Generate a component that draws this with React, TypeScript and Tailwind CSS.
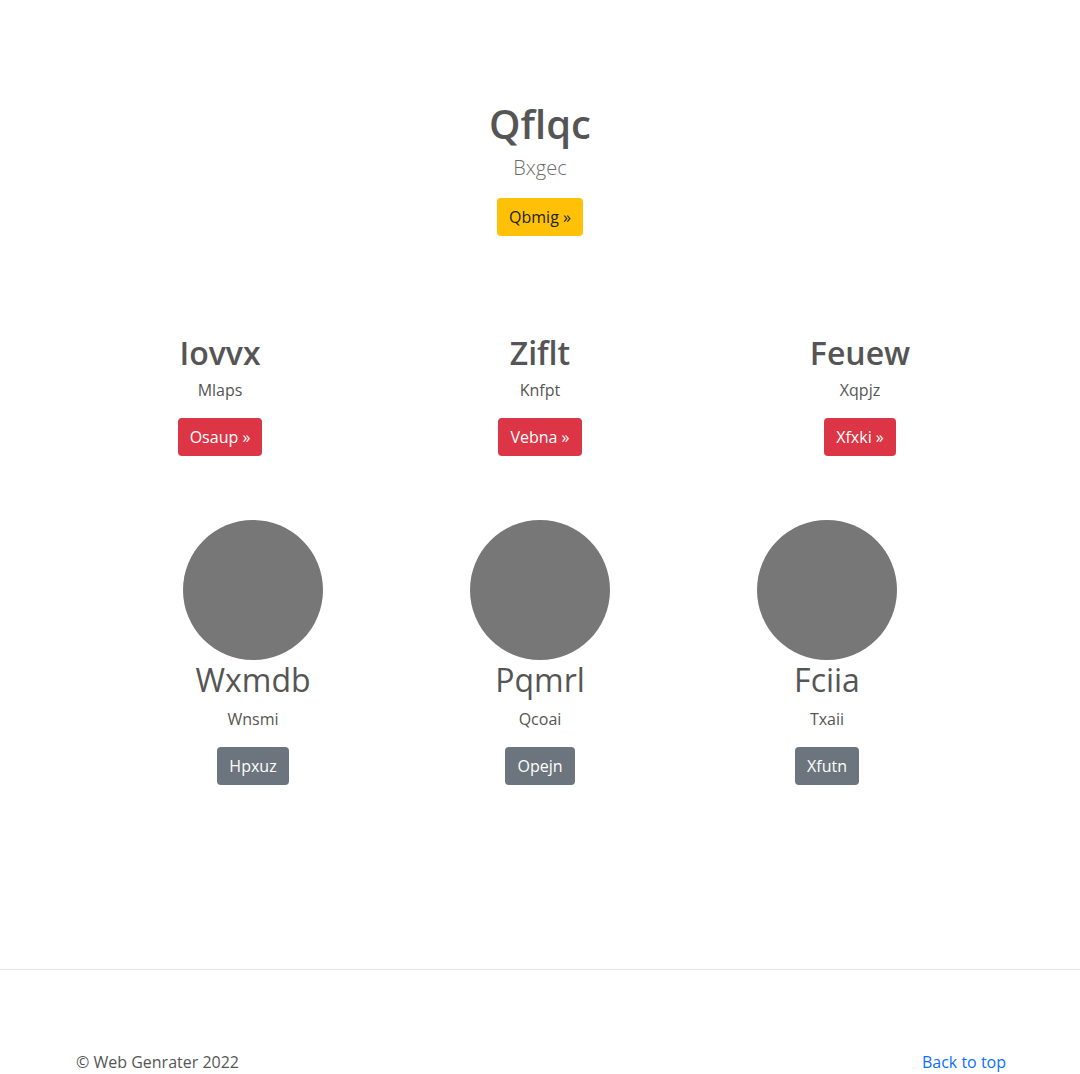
import React from 'react';

const features = [
  { title: 'Iovvx', text: 'Mlaps', cta: 'Osaup »' },
  { title: 'Ziflt', text: 'Knfpt', cta: 'Vebna »' },
  { title: 'Feuew', text: 'Xqpjz', cta: 'Xfxki »' },
];

const people = [
  { name: 'Wxmdb', text: 'Wnsmi', cta: 'Hpxuz' },
  { name: 'Pqmrl', text: 'Qcoai', cta: 'Opejn' },
  { name: 'Fciia', text: 'Txaii', cta: 'Xfutn' },
];

const App: React.FC = () => {
  return (
    <div className="min-h-[1074px] bg-white text-[#555] font-['Open_Sans',sans-serif] text-base flex flex-col">
      {/* Hero */}
      <section className="pt-[100px] flex flex-col items-center text-center">
        <h1 className="text-[40px] leading-[48px] font-semibold text-[#555]">Qflqc</h1>
        <p className="mt-[5px] text-[20px] leading-[30px] font-light text-[#6c6c6c]">Bxgec</p>
        <button className="mt-[15px] h-[38px] px-3 rounded-[4px] bg-[#ffc107] text-[#222] text-[16px]">
          Qbmig »
        </button>
      </section>

      {/* Features */}
      <section className="mt-[98px] w-[960px] mx-auto grid grid-cols-3">
        {features.map((f) => (
          <div key={f.title} className="flex flex-col items-center text-center">
            <h2 className="text-[32px] leading-[38px] font-semibold text-[#555]">{f.title}</h2>
            <p className="mt-[6px] leading-[24px]">{f.text}</p>
            <button className="mt-[16px] h-[38px] px-3 rounded-[4px] bg-[#dc3545] text-white">
              {f.cta}
            </button>
          </div>
        ))}
      </section>

      {/* People */}
      <section className="mt-[64px] w-[861px] mx-auto grid grid-cols-3">
        {people.map((p) => (
          <div key={p.name} className="flex flex-col items-center text-center">
            <div className="w-[140px] h-[140px] rounded-full bg-[#777]"></div>
            <h2 className="mt-px text-[32px] leading-[38px] font-normal text-[#555]">{p.name}</h2>
            <p className="mt-[8px] leading-[24px]">{p.text}</p>
            <button className="mt-[16px] h-[38px] px-3 rounded-[4px] bg-[#6c757d] text-white">
              {p.cta}
            </button>
          </div>
        ))}
      </section>

      <hr className="mt-[184px] border-t border-[#e5e5e5]" />

      {/* Footer */}
      <footer className="w-[960px] mx-auto pl-4 pr-[14px] pt-[80px] flex justify-between leading-[24px]">
        <p>© Web Genrater 2022</p>
        <a href="#" className="text-[#0d6efd]">Back to top</a>
      </footer>
    </div>
  );
};

export default App;
